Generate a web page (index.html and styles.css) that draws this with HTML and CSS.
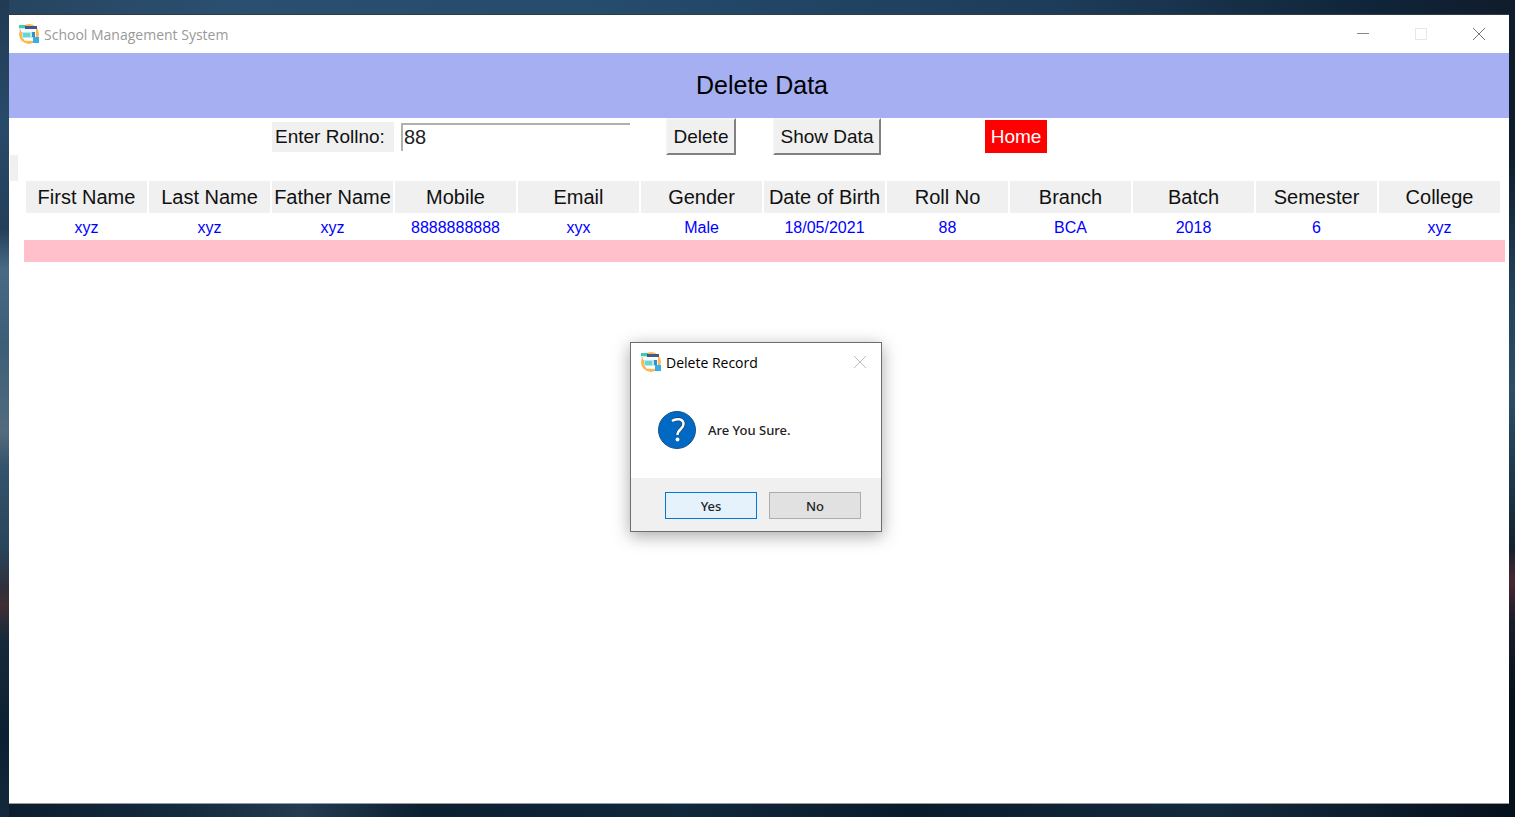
FILE: index.html
```html
<!DOCTYPE html>
<html lang="en">
<head>
<meta charset="utf-8">
<title>School Management System</title>
<link rel="stylesheet" href="styles.css">
</head>
<body class="desktop">
<svg class="sprite" aria-hidden="true">
  <symbol id="app-icon" viewBox="0 0 20 20">
    <circle cx="10" cy="10" r="10" fill="#ffb64f"/>
    <path d="M3 5h14v8l-3 4H6l-3-4z" fill="#fff1da"/>
    <path d="M0 1h7v3H0z" fill="#43c9ae"/>
    <path d="M6 2h12v3H6z" fill="#42598c"/>
    <path d="M0 4h6v2H0z" fill="#c5f0ea"/>
    <path d="M2 5h15v3H2z" fill="#f5fbff"/>
    <path d="M3 8h11v6H3z" fill="#b5ecf0"/>
    <path d="M4 9h7v4H4z" fill="#6fd3d1"/>
    <path d="M13 8h3v5h-3z" fill="#398fbd"/>
    <path d="M5 14h9v2H5z" fill="#fff"/>
    <path d="M14 13h6v6h-6z" fill="#36aeed"/>
  </symbol>
</svg>
<main class="window">
  <header class="titlebar">
    <svg class="app-icon" aria-hidden="true"><use href="#app-icon"/></svg>
    <span class="titlebar-text">School Management System</span>
    <div class="controls">
      <button class="control" type="button" aria-label="Minimize"><svg width="12" height="12" viewBox="0 0 12 12"><path d="M0 5.500h12" stroke="#888"/></svg></button>
      <button class="control" type="button" aria-label="Maximize" disabled><svg width="12" height="12" viewBox="0 0 12 12"><path d="M.5.5h11v11H.5z" fill="none" stroke="#e6e6e6"/></svg></button>
      <button class="control" type="button" aria-label="Close"><svg width="12" height="12" viewBox="0 0 12 12"><path d="M0 0l12 12M12 0L0 12" stroke="#777"/></svg></button>
    </div>
  </header>
  <h1 class="banner">Delete Data</h1>
  <form class="toolbar">
    <label class="roll-label" for="rollno">Enter Rollno:</label>
    <input class="roll-input" id="rollno" type="text" value="88">
    <button class="raised delete" type="button">Delete</button>
    <button class="raised show" type="button">Show Data</button>
    <button class="home" type="button">Home</button>
  </form>
  <div class="spacer"></div>
  <section class="records">
    <table class="table">
      <thead>
        <tr><th>First Name</th><th>Last Name</th><th>Father Name</th><th>Mobile</th><th>Email</th><th>Gender</th><th>Date of Birth</th><th>Roll No</th><th>Branch</th><th>Batch</th><th>Semester</th><th>College</th></tr>
      </thead>
      <tbody>
        <tr><td>xyz</td><td>xyz</td><td>xyz</td><td>8888888888</td><td>xyx</td><td>Male</td><td>18/05/2021</td><td>88</td><td>BCA</td><td>2018</td><td>6</td><td>xyz</td></tr>
      </tbody>
    </table>
    <div class="divider"></div>
  </section>
  <div class="dialog" role="dialog" aria-labelledby="dialog-title">
    <header class="titlebar dialog-bar">
      <svg class="app-icon" aria-hidden="true"><use href="#app-icon"/></svg>
      <span class="dialog-title" id="dialog-title">Delete Record</span>
      <button class="control dialog-close" type="button" aria-label="Close"><svg width="12" height="12" viewBox="0 0 12 12"><path d="M0 0l12 12M12 0L0 12" stroke="#bbb"/></svg></button>
    </header>
    <div class="dialog-body">
      <svg class="question" viewBox="0 0 38 38" aria-hidden="true">
        <circle cx="19" cy="19" r="18.500" fill="#0069c4" stroke="#17548c"/>
        <path d="M14 10c4-3 11.500-2.500 11.500 3 0 5.500-6 5-6 11" fill="none" stroke="#15477a" stroke-width="4"/>
        <path d="M14 10c4-3 11.500-2.500 11.500 3 0 5.500-6 5-6 11" fill="none" stroke="#fff" stroke-width="2.500"/>
        <circle cx="19.500" cy="28.500" r="1.900" fill="#fff"/>
      </svg>
      <p class="message">Are You Sure.</p>
    </div>
    <footer class="dialog-footer">
      <button class="choice primary" type="button">Yes</button>
      <button class="choice" type="button">No</button>
    </footer>
  </div>
</main>
</body>
</html>
```
FILE: styles.css
```css
* { box-sizing: border-box; }

.desktop {
  margin: 0;
  min-height: 100vh;
  padding: 14px 6px 13px 9px;
  display: flex;
  font-family: "Liberation Sans", Arial, sans-serif;
  background:
    linear-gradient(#203a54 0, #284a69 15%, #233f5a 28%, #486a85 33%, #3c5d77 42%, #526b7e 53%, #34536c 57%, #29455b 67%, #302f3a 72%, #402e33 74%, #172a3b 78%, #0b2032 90%, #14293b 100%) left / 9px 100% no-repeat,
    linear-gradient(#101c2b 0, #0d1b2b 18%, #22405a 35%, #2b4d68 48%, #1b3449 60%, #14212f 67%, #4a2730 71%, #1b1c29 76%, #06111d 85%, #07111e 100%) right / 6px 100% no-repeat,
    linear-gradient(90deg, #26445f 0, #2b4f70 15%, #254b6d 40%, #1d3c59 70%, #10253a 90%, #101c2b 100%) top / 100% 14px no-repeat,
    linear-gradient(90deg, #0b1d2d 0, #142b3e 12%, #243b50 20%, #0b2031 28%, #10283b 45%, #091b2b 60%, #132a3d 80%, #06101c 100%);
}

.sprite { position: absolute; width: 0; height: 0; }

.window {
  position: relative;
  flex: 1;
  background: #fff;
  border-top: 1px solid #333b43;
  border-bottom: 1px solid #999;
}

.titlebar {
  display: flex;
  align-items: center;
  height: 38px;
  padding-left: 10px;
  gap: 5px;
  font-family: "Open Sans", "Noto Sans", sans-serif;
  font-size: 14px;
  color: #999;
}

.app-icon { width: 20px; height: 20px; flex: none; }
.controls { display: flex; margin-left: auto; padding-right: 1px; }

.control {
  display: grid;
  place-items: center;
  width: 58px;
  height: 38px;
  padding: 0;
  border: 0;
  background: none;
}

.banner {
  margin: 0;
  padding-left: 6px;
  background: #a5aff2;
  color: #000;
  font-size: 25px;
  font-weight: 400;
  line-height: 65px;
  text-align: center;
}

.toolbar {
  display: grid;
  grid-template-columns: 263fr 122fr 7fr 229fr 36fr 70fr 37fr 108fr 104fr 62fr 462fr;
  align-items: center;
  min-height: 37px;
  font-size: 19px;
  color: #111;
}

.roll-label {
  grid-column: 2;
  padding-left: 3px;
  background: #f0f0f0;
  line-height: 30px;
  white-space: nowrap;
}

.roll-input {
  grid-column: 4;
  width: 100%;
  min-width: 0;
  height: 28px;
  padding: 0 1px;
  border: 0 solid #b0b0b0;
  border-width: 2px 0 0 2px;
  background: #fff;
  color: #222;
  font: 20px "Liberation Sans", Arial, sans-serif;
}

.raised {
  height: 37px;
  padding: 0;
  border: 2px solid;
  border-color: #f4f4f4 #808080 #808080 #f4f4f4;
  background: #f0f0f0;
  color: #111;
  font: 19px "Liberation Sans", Arial, sans-serif;
  white-space: nowrap;
}

.delete { grid-column: 6; }
.show { grid-column: 8; }

.home {
  grid-column: 10;
  height: 33px;
  padding: 0;
  border: 0;
  background: #f00;
  color: #fff;
  font: 19px "Liberation Sans", Arial, sans-serif;
}

.spacer {
  width: 8px;
  height: 26px;
  margin-left: 1px;
  background: #f0f0f0;
}

.records { padding: 0 4px 0 15px; }

.table {
  width: calc(100% - 3px);
  table-layout: fixed;
  border-collapse: separate;
  border-spacing: 2px 0;
  text-align: center;
}

.table th {
  height: 32px;
  padding: 0;
  background: #f0f0f0;
  color: #111;
  font-size: 20px;
  font-weight: 400;
  white-space: nowrap;
}

.table td {
  height: 27px;
  padding: 2px 0 0;
  color: #00f;
  font-size: 16px;
}

.divider { height: 22px; background: #ffc0cb; }

.dialog {
  position: absolute;
  left: 621px;
  top: 327px;
  width: 252px;
  border: 1px solid #6d6d6d;
  background: #fff;
  box-shadow: 0 4px 16px rgba(0, 0, 0, 0.35);
}

.dialog-bar { color: #000; }
.dialog-close { width: 42px; margin-left: auto; }

.dialog-body {
  display: flex;
  align-items: center;
  gap: 12px;
  height: 97px;
  padding-left: 27px;
}

.question { width: 38px; height: 38px; }

.message {
  margin: 0;
  color: #222;
  font: 500 13px "Noto Sans", sans-serif;
}

.dialog-footer {
  display: flex;
  justify-content: flex-end;
  gap: 12px;
  padding: 14px 20px 12px;
  background: #f0f0f0;
}

.choice {
  width: 92px;
  height: 27px;
  padding: 0;
  border: 1px solid #adadad;
  background: #e1e1e1;
  color: #222;
  font: 500 13px "Noto Sans", sans-serif;
}

.primary { border-color: #0078d7; background: #e5f1fb; }
```
